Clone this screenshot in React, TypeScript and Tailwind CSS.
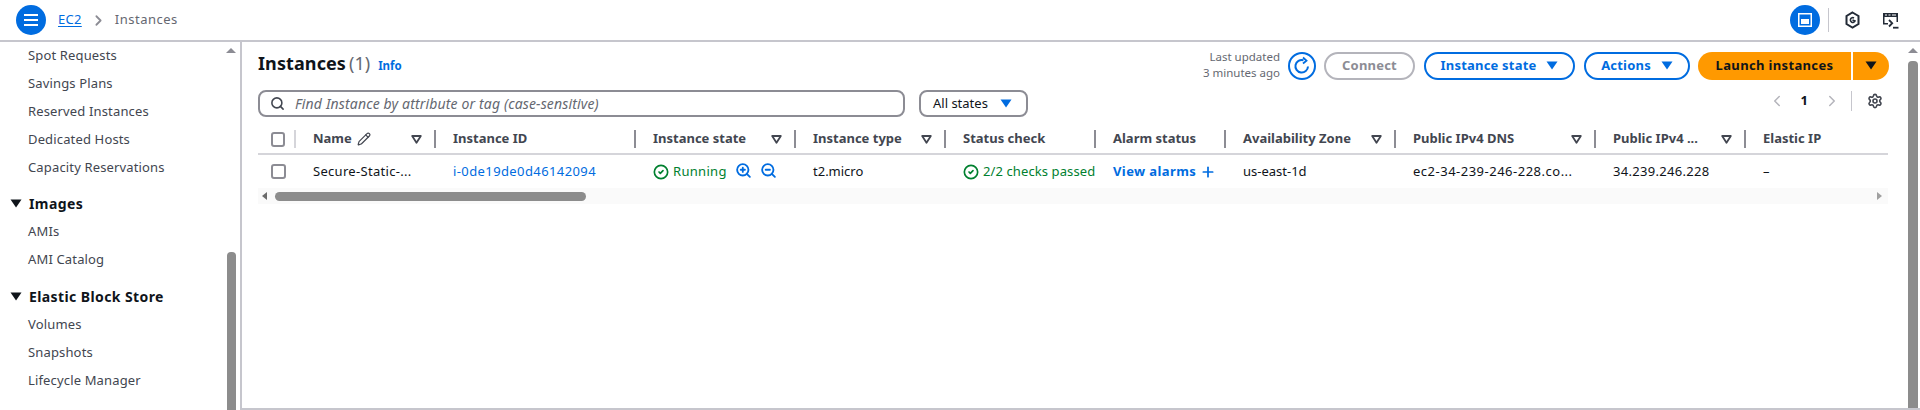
import { CircleCheck, Pencil, ZoomIn, ZoomOut, Search, Settings, ChevronLeft, ChevronRight, Plus } from "lucide-react";
import type { ReactNode } from "react";

const Caret = ({ className = "" }: { className?: string }) => (
  <svg width="12" height="9" viewBox="0 0 12 9" className={className}><path d="M0.5 0.5H11.5L6 8.5Z" fill="currentColor" /></svg>
);
const Filter = () => (
  <svg width="11" height="9" viewBox="0 0 11 9" className="text-[#424650]"><path d="M1.2 1H9.8L5.5 7.8Z" fill="none" stroke="currentColor" strokeWidth="1.8" strokeLinejoin="round" /></svg>
);

const nav = [
  { t: "Spot Requests" }, { t: "Savings Plans" }, { t: "Reserved Instances" }, { t: "Dedicated Hosts" }, { t: "Capacity Reservations" },
  { t: "Images", h: "mt-[7px] h-[29px]" }, { t: "AMIs" }, { t: "AMI Catalog" },
  { t: "Elastic Block Store", h: "mt-[8px] h-[29px]" }, { t: "Volumes" }, { t: "Snapshots" }, { t: "Lifecycle Manager" },
];

const cols: { t: string; w: string; f?: boolean; icon?: boolean }[] = [
  { t: "Name", w: "w-[140px]", f: true, icon: true },
  { t: "Instance ID", w: "w-[200px]" },
  { t: "Instance state", w: "w-[160px]", f: true },
  { t: "Instance type", w: "w-[150px]", f: true },
  { t: "Status check", w: "w-[150px]" },
  { t: "Alarm status", w: "w-[130px]" },
  { t: "Availability Zone", w: "w-[170px]", f: true },
  { t: "Public IPv4 DNS", w: "w-[200px]", f: true },
  { t: "Public IPv4 ...", w: "w-[150px]", f: true },
  { t: "Elastic IP", w: "w-[142px]" },
];

const Cell = ({ w, children }: { w: string; children: ReactNode }) => (
  <div className={`${w} shrink-0 pl-[17px] flex items-center whitespace-nowrap`}>{children}</div>
);

export default function App() {
  return (
    <div className="w-[1920px] h-[410px] overflow-hidden bg-white flex flex-col text-[13px] text-[#0f141a] font-['Noto_Sans','Open_Sans',sans-serif]">
      <header className="h-[42px] shrink-0 border-b-2 border-[#c6c6cd] flex items-center pl-4 pr-[21px]">
        <div className="w-[30px] h-[30px] rounded-full bg-[#006ce0] flex flex-col items-center justify-center gap-[3px]">
          <span className="w-[14px] h-[2px] bg-white" /><span className="w-[14px] h-[2px] bg-white" /><span className="w-[14px] h-[2px] bg-white" />
        </div>
        <span className="ml-3 text-[#006ce0] text-[13px] tracking-[0.3px] underline underline-offset-2">EC2</span>
        <ChevronRight size={17} className="mx-[8px] text-[#8c8c94]" strokeWidth={2.5} />
        <span className="text-[#656871] text-[13px] tracking-[0.5px]">Instances</span>
        <div className="ml-auto flex items-center">
          <div className="w-[30px] h-[30px] rounded-full bg-[#006ce0] flex items-center justify-center">
            <svg width="16" height="16" viewBox="0 0 16 16"><rect x="1.75" y="1.75" width="12.5" height="12.5" fill="none" stroke="white" strokeWidth="1.5" /><rect x="4" y="7" width="8" height="5" fill="white" /></svg>
          </div>
          <span className="w-px h-[24px] bg-[#c6c6cd] ml-[8px]" />
          <svg width="15" height="18" viewBox="0 0 15 18" className="ml-[16px]" fill="none" stroke="#232b37" strokeWidth="2"><path d="M7.5 1.5 13.500 5v8l-6 3.500L1.500 13V5Z" /><path d="M9 7a2.400 2.400 0 1 0 1 3l-2.500-1" strokeWidth="1.600" /></svg>
          <svg width="17" height="17" viewBox="0 0 17 17" className="ml-[22px]" fill="none" stroke="#232b37"><path d="M1 1h15v9h-1.500V5H2.500v6H6v1.500H1Z" fill="#232b37" stroke="none" /><path d="M3 3h2M6.500 3h2M10 3h4" stroke="white" strokeWidth="1.200" /><path d="M7 8l3.200 3.200L7 14.500" strokeWidth="1.800" /><path d="M11 15.700h5.500" strokeWidth="1.800" /></svg>
        </div>
      </header>

      <div className="flex-1 flex min-h-0">
        <aside className="w-[240px] shrink-0 flex relative overflow-hidden">
          <nav className="flex-1 text-[#424650] tracking-[0.15px]">
            {nav.map((n) => n.h ? (
              <div key={n.t} className={`${n.h} pl-[10px] flex items-center font-bold text-[#0f141a] text-[14px] tracking-[0.4px]`}>
                <Caret className="mr-[7px] text-[#0f141a]" />{n.t}
              </div>
            ) : (
              <div key={n.t} className="h-[28px] pl-[28px] flex items-center">{n.t}</div>
            ))}
          </nav>
          <div className="w-[12px] mr-[3px] bg-white flex flex-col items-center">
            <span className="mt-[6px] w-0 h-0 border-x-[5px] border-x-transparent border-b-[5px] border-b-[#8c8c94]" />
            <span className="mt-[199px] flex-1 w-[9px] rounded-t bg-[#8c8c8c]" />
          </div>
        </aside>

        <main className="flex-1 min-w-0 border-l-2 border-b-2 border-[#c6c6cd] flex">
          <div className="w-[1631px] shrink-0 ml-[16px] flex flex-col">
            <div className="h-[48px] flex items-start justify-between">
              <div className="flex items-baseline mt-[7px]">
                <span className="text-[18px] font-bold leading-[28px] tracking-[0.1px]">Instances</span>
                <span className="text-[18px] text-[#656871] leading-[28px] ml-[3px]">(1)</span>
                <span className="text-[#006ce0] text-[11.5px] font-bold ml-[8px]">Info</span>
              </div>
              <div className="flex items-center mt-[8px] text-[13px] font-bold tracking-[0.2px]">
                <div className="text-right text-[#656871] text-[11.5px] font-normal tracking-normal leading-[16px] w-[100px] -mt-[1px]">Last updated<br />3 minutes ago</div>
                <div className="ml-[8px] w-[28px] h-[28px] rounded-full border-2 border-[#006ce0] flex items-center justify-center">
                  <svg width="20" height="20" viewBox="0 0 20 20" fill="none" stroke="#006ce0" strokeWidth="2"><path d="M16 10.500A6.300 6.300 0 1 1 11.500 4.200" /><path d="M11 1.500 14.500 4.700 11 7.500" strokeWidth="1.800" /></svg>
                </div>
                <div className="ml-[8px] w-[91px] h-[28px] rounded-full border-2 border-[#b4b4bb] text-[#8c8c94] flex items-center justify-center">Connect</div>
                <div className="ml-[9px] w-[151px] h-[28px] rounded-full border-2 border-[#006ce0] text-[#006ce0] flex items-center justify-center gap-[10px]">Instance state <Caret /></div>
                <div className="ml-[9px] w-[106px] h-[28px] rounded-full border-2 border-[#006ce0] text-[#006ce0] flex items-center justify-center gap-[10px]">Actions <Caret /></div>
                <div className="ml-[8px] w-[153px] h-[28px] rounded-l-full bg-[#ff9900] flex items-center justify-center tracking-[0.35px]">Launch instances</div>
                <div className="ml-[2px] w-[36px] h-[28px] rounded-r-full bg-[#ff9900] flex items-center justify-center"><Caret /></div>
              </div>
            </div>

            <div className="h-[35px] flex items-start">
              <div className="w-[647px] h-[27px] border-2 border-[#8c8c94] rounded-lg flex items-center pl-[10px]">
                <Search size={15} strokeWidth={2.5} className="text-[#424650]" />
                <span className="ml-[10px] italic text-[14px] tracking-[0.15px] text-[#656871]">Find Instance by attribute or tag (case-sensitive)</span>
              </div>
              <div className="ml-[14px] w-[109px] h-[27px] border-2 border-[#8c8c94] rounded-lg flex items-center pl-[12px] gap-[12px]">
                All states <Caret className="text-[#006ce0]" />
              </div>
              <div className="ml-auto flex items-center h-[20px] mt-[1px] mr-[6px]">
                <ChevronLeft size={18} className="text-[#b4b4bb]" />
                <span className="mx-[15px] font-bold">1</span>
                <ChevronRight size={18} className="text-[#b4b4bb]" />
                <span className="w-px h-[20px] bg-[#c6c6cd] ml-[10px]" />
                <Settings size={16} strokeWidth={2.4} className="ml-[15px] text-[#424650]" />
              </div>
            </div>

            <div className="w-[1630px] h-[28px] flex items-center border-b-2 border-[#d5d5da] box-content font-bold text-[#424650]">
              <div className="w-[38px] shrink-0 flex items-center pl-[13px] h-full">
                <span className="w-[15px] h-[15px] rounded-[3px] border-2 border-[#8c8c94]" />
                <span className="ml-[9px] w-[2px] h-[18px] bg-[#d5d5da]" />
              </div>
              {cols.map((c, i) => (
                <div key={c.t} className={`${c.w} shrink-0 pl-[17px] pr-[14px] h-full flex items-center whitespace-nowrap relative`}>
                  {c.t}
                  {c.icon && <Pencil size={14} strokeWidth={2} className="ml-[5px]" />}
                  {c.f && <span className="ml-auto flex"><Filter /></span>}
                  {i < 9 && <span className="absolute right-0 top-[5px] w-[2px] h-[18px] bg-[#8c8c94]" />}
                </div>
              ))}
            </div>

            <div className="w-[1630px] h-[33px] flex items-center">
              <div className="w-[38px] shrink-0 pl-[13px]"><span className="block w-[15px] h-[15px] rounded-[3px] border-2 border-[#8c8c94]" /></div>
              <Cell w="w-[140px]"><span className="tracking-[0.3px]">Secure-Static-...</span></Cell>
              <Cell w="w-[200px]"><span className="text-[#006ce0] tracking-[0.4px]">i-0de19de0d46142094</span></Cell>
              <Cell w="w-[160px]">
                <span className="flex items-center gap-[4px] text-[#00802f] tracking-[0.3px]"><CircleCheck size={16} strokeWidth={2.5} />Running</span>
                <ZoomIn size={17} strokeWidth={2.6} className="text-[#006ce0] ml-[8px] -mt-[2px]" />
                <ZoomOut size={17} strokeWidth={2.6} className="text-[#006ce0] ml-[8px] -mt-[2px]" />
              </Cell>
              <Cell w="w-[150px]">t2.micro</Cell>
              <Cell w="w-[150px]"><span className="flex items-center gap-[4px] text-[#00802f] tracking-[0.1px]"><CircleCheck size={16} strokeWidth={2.5} />2/2 checks passed</span></Cell>
              <Cell w="w-[130px]"><span className="text-[#006ce0] font-bold tracking-[0.4px]">View alarms</span><Plus size={16} strokeWidth={2.6} className="text-[#006ce0] ml-[4px]" /></Cell>
              <Cell w="w-[170px]">us-east-1d</Cell>
              <Cell w="w-[200px]"><span className="tracking-[0.5px]">ec2-34-239-246-228.co...</span></Cell>
              <Cell w="w-[150px]"><span className="tracking-[0.3px]">34.239.246.228</span></Cell>
              <Cell w="w-[142px]">–</Cell>
            </div>

            <div className="w-[1630px] h-[16px] bg-[#fafafa] flex items-center pl-[4px] pr-[6px]">
              <span className="w-0 h-0 border-y-[4px] border-y-transparent border-r-[5px] border-r-[#6b6b6b]" />
              <span className="ml-[8px] w-[311px] h-[9px] rounded-full bg-[#8c8c8c]" />
              <span className="ml-auto w-0 h-0 border-y-[4px] border-y-transparent border-l-[5px] border-l-[#a0a0a0]" />
            </div>
          </div>

          <div className="ml-[19px] w-[10px] flex flex-col items-center">
            <span className="mt-[6px] w-0 h-0 border-x-[5px] border-x-transparent border-b-[5px] border-b-[#8c8c94]" />
            <span className="mt-[8px] flex-1 w-[10px] rounded-t bg-[#8c8c8c]" />
          </div>
        </main>
      </div>
    </div>
  );
}
